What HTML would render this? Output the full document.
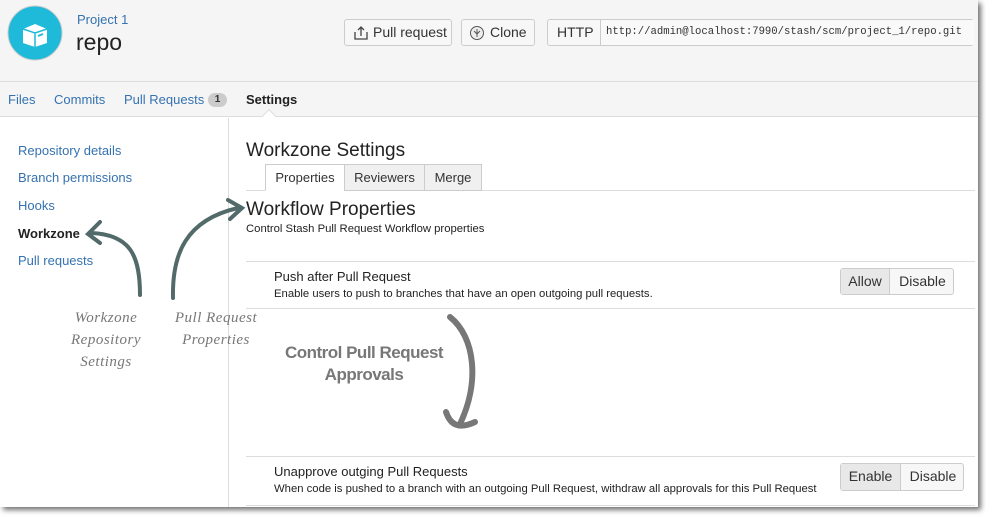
<!DOCTYPE html>
<html><head><meta charset="utf-8"><style>
*{margin:0;padding:0;box-sizing:border-box}
body{width:998px;height:517px;background:#fff;font-family:"Liberation Sans",Arial,sans-serif;position:relative;overflow:hidden;color:#333}
#page{position:absolute;left:0;top:0;width:978px;height:507px;background:#fff;box-shadow:3px 3px 5px rgba(0,0,0,.55);overflow:hidden}
.hdr{position:absolute;left:0;top:0;width:978px;height:82px;background:#f5f5f5;border-bottom:1px solid #ddd}
.nav{position:absolute;left:0;top:82px;width:978px;height:35px;background:#f5f5f5;border-bottom:1px solid #ddd}
.a{position:absolute;white-space:nowrap}
.btn{position:absolute;border:1px solid #ccc;border-radius:3px;background:#f7f7f7;font-size:14px;color:#333;height:27px;line-height:25px}
.link{color:#3572b0}
.line{position:absolute;left:246px;width:729px;height:1px;background:#ddd}
.tab{position:absolute;top:164px;height:27px;border:1px solid #ccc;background:#f0f0f0;font-size:13px;line-height:25px;text-align:center}
.hand{font-family:"Liberation Serif",serif;font-style:italic;color:#777;font-size:15px;letter-spacing:.5px}
</style></head><body>
<div id="page">
<div class="hdr"></div>
<svg class="a" style="left:7px;top:5px" width="56" height="56"><circle cx="28" cy="28" r="27" fill="#1fb9d9" stroke="#ccc" stroke-width="1"/>
<path d="M16 24 L28 19 L40 24 L40 38 L28 42 L16 38 Z" fill="#fff"/><path d="M16 24 L28 28 L40 24 M28 28 L28 42" stroke="#1fb9d9" stroke-width="1.5" fill="none"/><path d="M31 31 l5 -2" stroke="#1fb9d9" stroke-width="2"/></svg>
<div class="a link" style="left:77px;top:12px;font-size:13px">Project 1</div>
<div class="a" style="left:76px;top:29px;font-size:23px;color:#222">repo</div>
<div class="btn" style="left:344px;top:19px;width:108px;padding-left:28px">Pull request</div>
<svg class="a" style="left:353px;top:25px" width="16" height="16"><path d="M2 7v7h12V7M8 11V2M5 5l3-3 3 3" stroke="#444" stroke-width="1.3" fill="none"/></svg>
<div class="btn" style="left:461px;top:19px;width:74px;padding-left:28px">Clone</div>
<svg class="a" style="left:469px;top:25px" width="16" height="16"><circle cx="8" cy="8" r="6.5" stroke="#555" fill="#eee"/><path d="M8 4v8M5 6l3 3 3-3" stroke="#555" fill="none"/></svg>
<div class="btn" style="left:547px;top:19px;width:427px;background:#f7f7f7"><span style="position:absolute;left:9px;font-size:14px">HTTP</span><div style="position:absolute;left:52px;top:0;width:374px;height:25px;border-left:1px solid #ccc;background:#f9f9f9;font-family:'Liberation Mono',monospace;font-size:10.6px;padding-left:5px;color:#333">http://admin@localhost:7990/stash/scm/project_1/repo.git</div></div>
<div class="nav"></div>
<div class="a link" style="left:8px;top:92px;font-size:13px">Files</div>
<div class="a link" style="left:54px;top:92px;font-size:13px">Commits</div>
<div class="a link" style="left:124px;top:92px;font-size:13px">Pull Requests</div>
<div class="a" style="left:208px;top:93px;width:19px;height:14px;border-radius:7px;background:#ccc;font-size:10px;text-align:center;line-height:14px;font-weight:bold;color:#333">1</div>
<div class="a" style="left:246px;top:92px;font-size:13px;font-weight:bold;color:#222">Settings</div>
<div class="a" style="left:264px;top:111px;width:10px;height:10px;background:#fff;border-left:1px solid #ddd;border-top:1px solid #ddd;transform:rotate(45deg)"></div>
<div class="a" style="left:228px;top:118px;width:1px;height:389px;background:#ddd"></div>
<div class="a link" style="left:18px;top:143px;font-size:13px">Repository details</div>
<div class="a link" style="left:18px;top:170px;font-size:13px">Branch permissions</div>
<div class="a link" style="left:18px;top:198px;font-size:13px">Hooks</div>
<div class="a" style="left:18px;top:226px;font-size:13px;font-weight:bold;color:#222">Workzone</div>
<div class="a link" style="left:18px;top:253px;font-size:13px">Pull requests</div>
<div class="a" style="left:246px;top:140px;font-size:19px;color:#222">Workzone Settings</div>
<div class="line" style="top:190px"></div>
<div class="tab" style="left:265px;width:80px;background:#fff;border-bottom-color:#fff;color:#333">Properties</div>
<div class="tab" style="left:344px;width:81px">Reviewers</div>
<div class="tab" style="left:424px;width:58px">Merge</div>
<div class="a" style="left:246px;top:199px;font-size:19px;color:#222">Workflow Properties</div>
<div class="a" style="left:246px;top:223px;font-size:11.3px;color:#222">Control Stash Pull Request Workflow properties</div>
<div class="line" style="top:261px"></div>
<div class="a" style="left:274px;top:269px;font-size:13px;color:#222">Push after Pull Request</div>
<div class="a" style="left:274px;top:288px;font-size:11.3px;color:#222">Enable users to push to branches that have an open outgoing pull requests.</div>
<div class="btn" style="left:840px;top:268px;width:114px;height:27px"><span style="position:absolute;left:0;width:49px;text-align:center;background:#e8e8e8;height:25px;border-right:1px solid #ccc">Allow</span><span style="position:absolute;left:50px;width:63px;text-align:center">Disable</span></div>
<div class="line" style="top:308px"></div>
<div class="a" style="left:284px;top:342px;font-size:17px;font-weight:bold;color:#777;text-align:center;width:160px;line-height:22px;letter-spacing:-.5px">Control Pull Request<br>Approvals</div>
<svg class="a" style="left:430px;top:312px" width="60" height="125"><path d="M20 5 C45 25 50 70 30 112 M16 100 C20 112 28 118 45 110" stroke="#777" stroke-width="6" fill="none" stroke-linecap="round"/></svg>
<svg class="a" style="left:60px;top:195px" width="200" height="110"><path d="M80 100 C80 60 70 40 32 38 M40 27 L28 39 L40 48" stroke="#536a6a" stroke-width="4" fill="none" stroke-linecap="round"/>
<path d="M113 103 C112 60 125 25 178 13 M168 5 L182 13 L170 24" stroke="#536a6a" stroke-width="4" fill="none" stroke-linecap="round"/></svg>
<div class="a hand" style="left:66px;top:307px;text-align:center;width:80px;line-height:22px">Workzone<br>Repository<br>Settings</div>
<div class="a hand" style="left:166px;top:307px;text-align:center;width:100px;line-height:22px">Pull Request<br>Properties</div>
<div class="line" style="top:456px"></div>
<div class="a" style="left:274px;top:464px;font-size:13px;color:#222">Unapprove outging Pull Requests</div>
<div class="a" style="left:274px;top:483px;font-size:11.3px;color:#222">When code is pushed to a branch with an outgoing Pull Request, withdraw all approvals for this Pull Request</div>
<div class="btn" style="left:840px;top:463px;width:124px;height:28px"><span style="position:absolute;left:0;width:60px;text-align:center;background:#e8e8e8;height:26px;border-right:1px solid #ccc">Enable</span><span style="position:absolute;left:61px;width:62px;text-align:center">Disable</span></div>
<div class="line" style="top:505px"></div>
</div>
</body></html>
